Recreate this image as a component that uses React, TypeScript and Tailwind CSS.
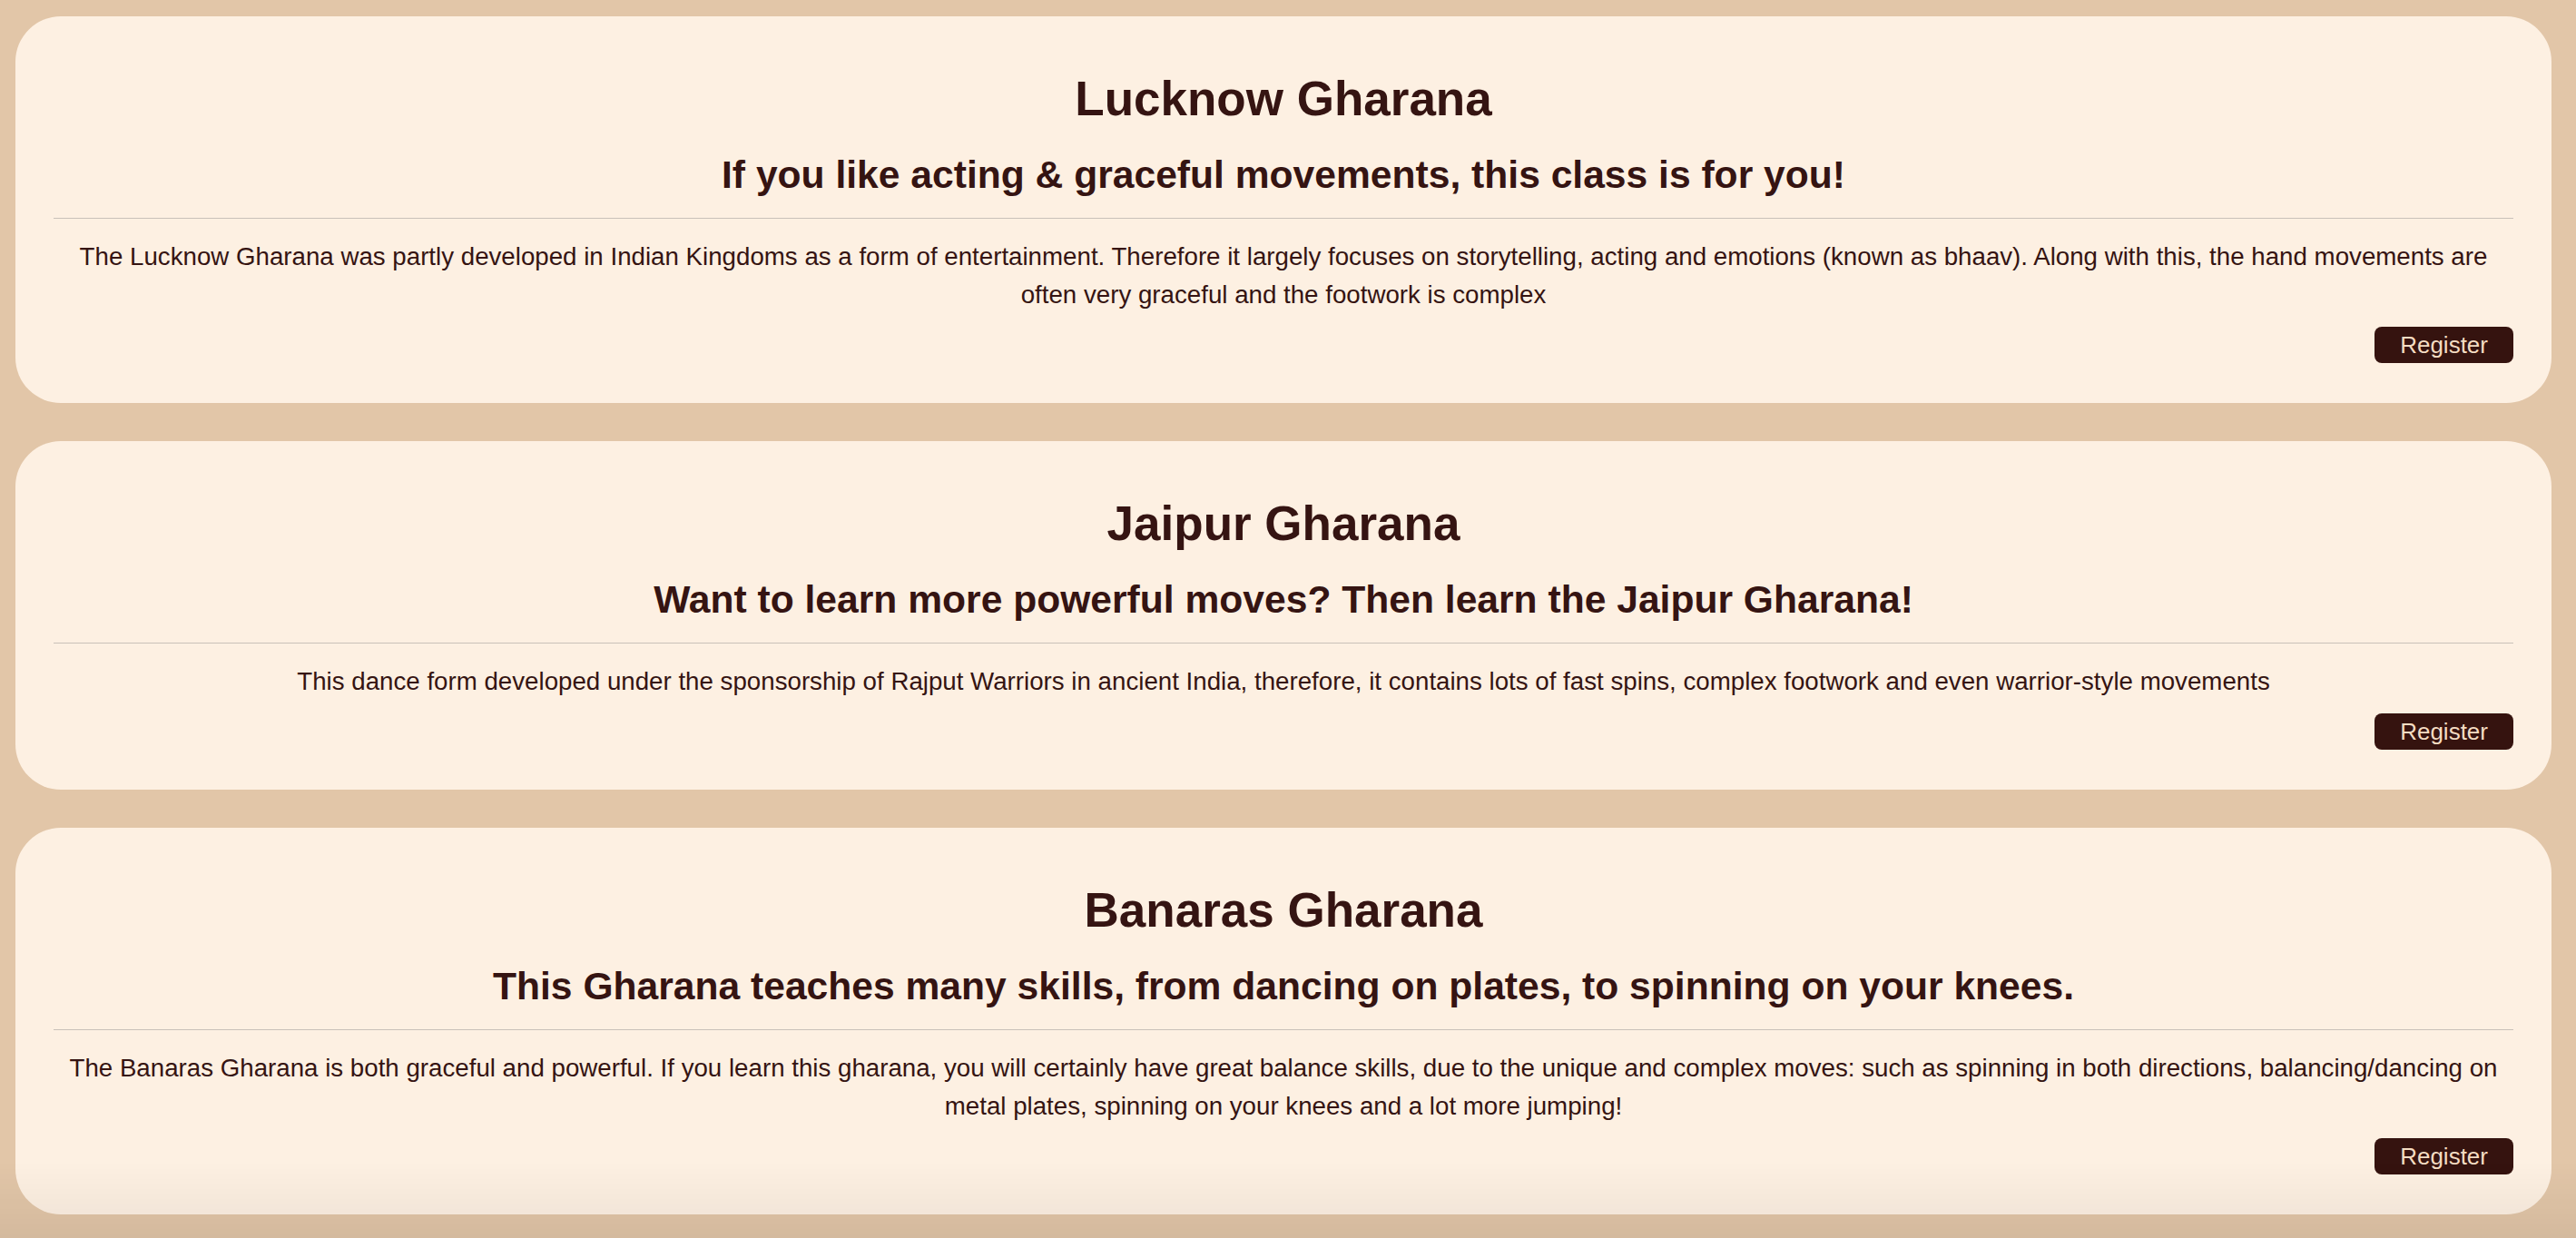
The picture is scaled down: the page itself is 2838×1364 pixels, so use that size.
import React from 'react'

type Gharana = {
  name: string
  tagline: string
  text: string
}

const gharanas: Gharana[] = [
  {
    name: 'Lucknow Gharana',
    tagline: 'If you like acting & graceful movements, this class is for you!',
    text: 'The Lucknow Gharana was partly developed in Indian Kingdoms as a form of entertainment. Therefore it largely focuses on storytelling, acting and emotions (known as bhaav). Along with this, the hand movements are often very graceful and the footwork is complex',
  },
  {
    name: 'Jaipur Gharana',
    tagline: 'Want to learn more powerful moves? Then learn the Jaipur Gharana!',
    text: 'This dance form developed under the sponsorship of Rajput Warriors in ancient India, therefore, it contains lots of fast spins, complex footwork and even warrior-style movements',
  },
  {
    name: 'Banaras Gharana',
    tagline: 'This Gharana teaches many skills, from dancing on plates, to spinning on your knees.',
    text: 'The Banaras Gharana is both graceful and powerful. If you learn this gharana, you will certainly have great balance skills, due to the unique and complex moves: such as spinning in both directions, balancing/dancing on metal plates, spinning on your knees and a lot more jumping!',
  },
]

function ClassCard({ name, tagline, text }: Gharana) {
  return (
    <div className="rounded-[50px] bg-[#fdf0e2] px-[42px] pt-[60px] pb-[44px] text-center text-[#351412]">
      <h1 className="text-[53px] leading-[62px] font-bold">{name}</h1>
      <h2 className="mt-[27px] text-[42.6px] leading-[50px] font-bold">{tagline}</h2>
      <hr className="mt-[23px] border-0 border-t border-[#c9c1b9]" />
      <p className="mt-[21px] text-[27.7px] leading-[42px]">{text}</p>
      <div className="mt-[14px] flex justify-end">
        <button className="h-[40px] rounded-[8px] bg-[#35130f] px-[28px] text-[26px] leading-[40px] text-[#f4dcc2]">
          Register
        </button>
      </div>
    </div>
  )
}

export default function App() {
  return (
    <div
      className="min-h-screen bg-[#e2c6a8] pt-[18px] pr-[27px] pb-[40px] pl-[17px]"
      style={{ fontFamily: '"Liberation Sans", Arial, sans-serif' }}
    >
      <div className="flex flex-col gap-[42px]">
        {gharanas.map((g) => (
          <ClassCard key={g.name} {...g} />
        ))}
      </div>
      <div className="pointer-events-none fixed inset-x-0 bottom-0 h-[84px] bg-linear-to-b from-transparent to-black/6" />
    </div>
  )
}
